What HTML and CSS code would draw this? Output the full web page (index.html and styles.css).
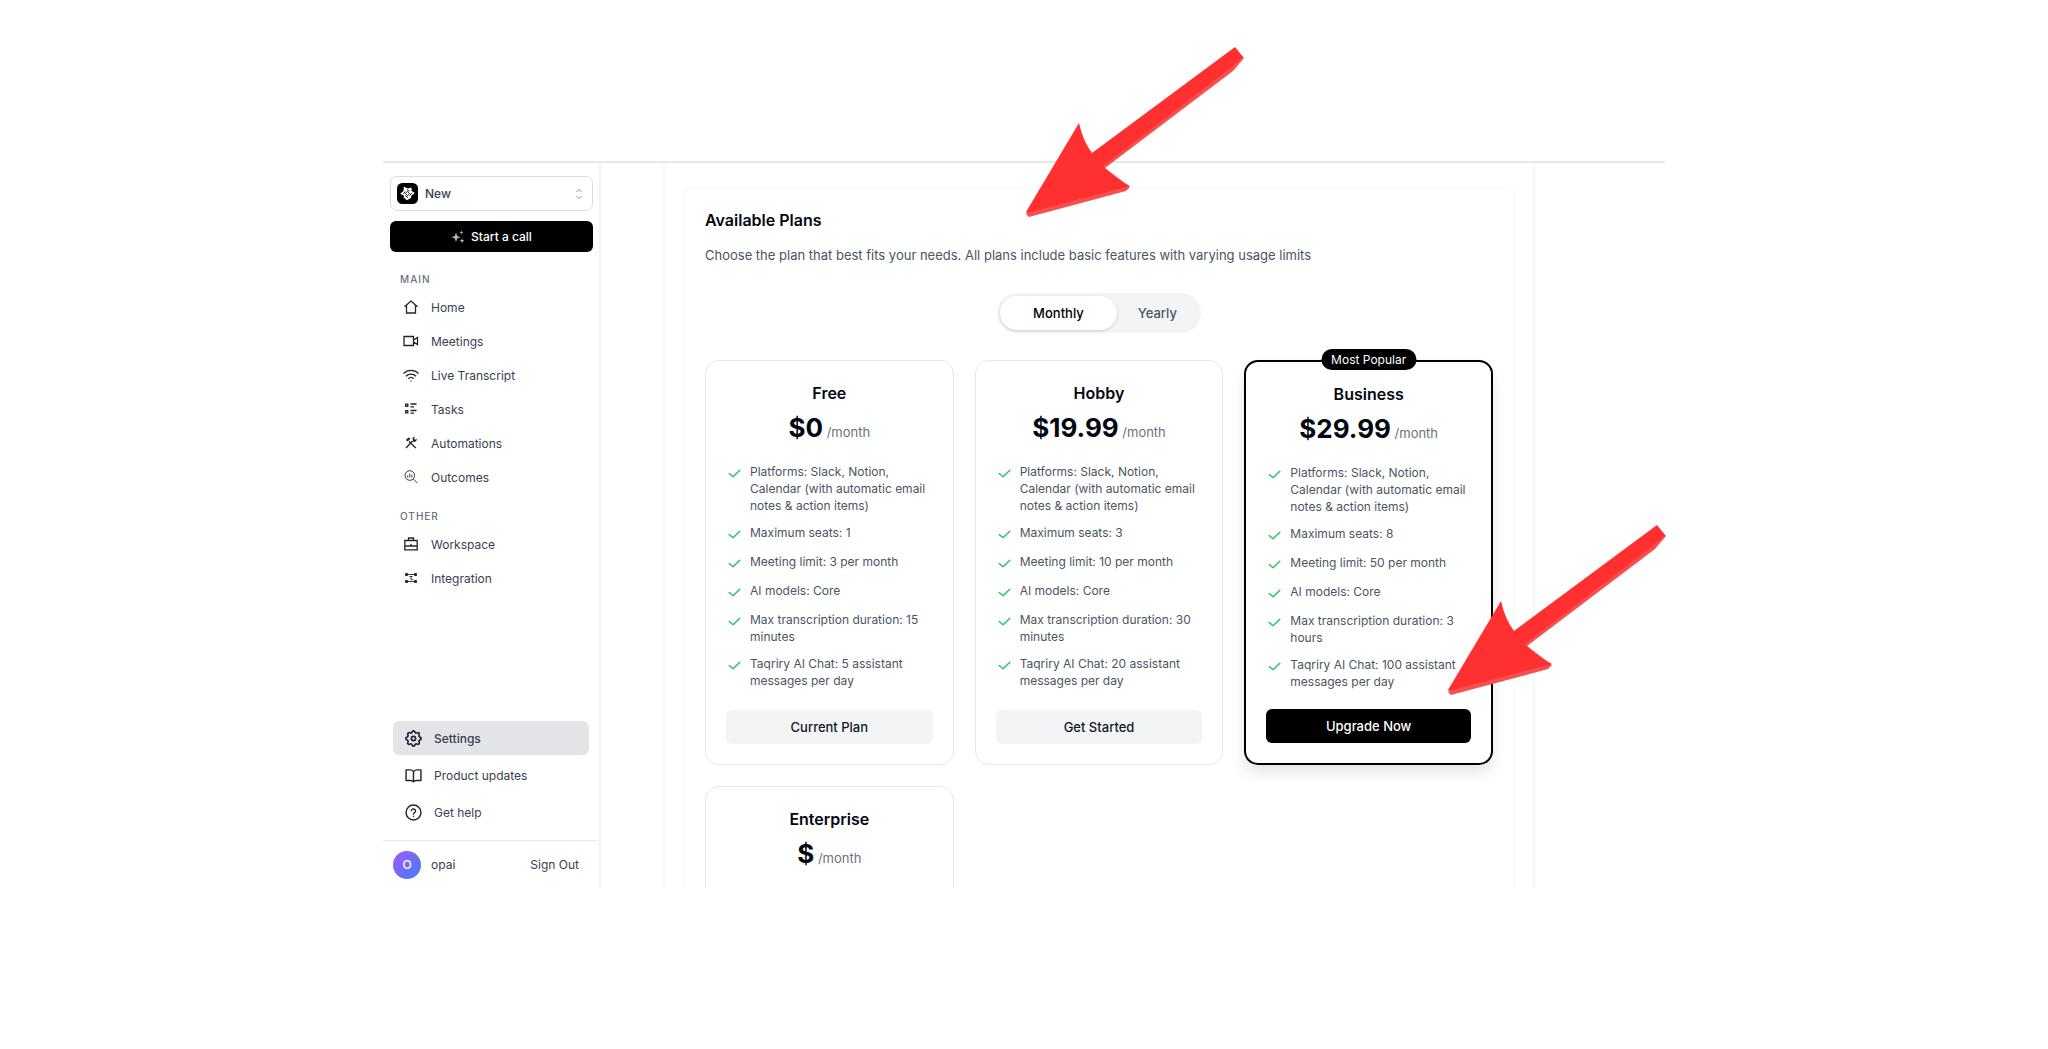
FILE: index.html
```html
<!DOCTYPE html>
<html lang="en">
<head>
  <meta charset="UTF-8">
  <meta name="viewport" content="width=device-width, initial-scale=1.0">
  <title>Available Plans</title>
  <link rel="stylesheet" href="styles.css">
</head>
<body>

<!-- Shared icons -->
<svg class="sprite" aria-hidden="true">
  <symbol id="check" viewBox="0 0 24 24"><path d="M19.500 7.500 10 16.500l-5.500-4.500"/></symbol>
  <symbol id="arrow" viewBox="0 0 218 171">
    <path fill="#f5504d" d="M209 1 L218 11 L207 24 L79 121 L104 140 L100 144 L3 170 L0 167 L70 110 Z"/>
    <path fill="#ff302f" d="M209 0 L217 10 L206 20 L77 119 Q88 131 104 139 L1 166 L0 165 L53 76 Q57 94 66 106 Z"/>
  </symbol>
</svg>

<div class="stage">
  <div class="app">

    <!-- Sidebar -->
    <aside class="sidebar">
      <div class="sidebar-top">
        <div class="workspace">
          <svg class="workspace-logo" viewBox="0 0 20 20" aria-hidden="true">
            <rect width="20" height="20" rx="5" fill="#000"/>
            <path fill="#fff" d="M6.500 3.500 10.500 5.200l3.200-.9.300 3.200L17 9.500l-3.200 2.300-.6 2.400L9.500 16.500 6.400 14l.1-2.200L3 10.200l3.200-2.700Z"/>
            <path fill="none" stroke="#000" stroke-width="0.800" d="m10 8 2 2-2 2-2-2ZM9.500 6l2.500 2M14 9.500l-2 2.500M10.500 14 8 12M6 10.500l2-2.500"/>
          </svg>
          <select class="workspace-select" aria-label="Workspace">
            <option>New</option>
          </select>
          <svg class="chevrons" viewBox="0 0 10 14" aria-hidden="true"><path d="m2.500 5 2.500-2.500L7.500 5M2.500 9 5 11.500 7.500 9"/></svg>
        </div>

        <button class="call-btn" type="button">
          <svg viewBox="0 0 14 14" aria-hidden="true"><path d="M5 2.500 6.200 6 9.500 7.200 6.200 8.500 5 12 3.800 8.500.5 7.200 3.800 6ZM10.500.500l.6 1.400 1.400.6-1.400.6-.6 1.400-.6-1.400-1.400-.6 1.400-.6ZM11 8.500l.7 1.600 1.600.7-1.600.7-.7 1.600-.7-1.600-1.600-.7 1.600-.7Z"/></svg>
          Start a call
        </button>
      </div>

      <nav class="nav">
        <h3 class="nav-title">MAIN</h3>
        <a class="nav-link" href="#">
          <svg class="icon" viewBox="0 0 16 16"><path d="M1.500 7.800 8 2l6.500 5.800M3.500 6.500v7.500h9V6.500"/></svg>
          Home
        </a>
        <a class="nav-link" href="#">
          <svg class="icon" viewBox="0 0 16 16"><path d="M1 3.500h9.500v9H1ZM10.500 7 14.500 4.500v7L10.500 9"/></svg>
          Meetings
        </a>
        <a class="nav-link" href="#">
          <svg class="icon" viewBox="0 0 16 16"><path d="M.5 6.500a10.500 10.500 0 0 1 15 0M2.900 9.200a7.200 7.200 0 0 1 10.200 0M5.300 11.700a3.900 3.900 0 0 1 5.400 0M7.500 13.800h1"/></svg>
          Live Transcript
        </a>
        <a class="nav-link" href="#">
          <svg class="icon" viewBox="0 0 16 16"><path d="M2.700 3.200h2.100v2.100H2.700ZM2.700 9.700h2.100v2.100H2.700ZM7.500 3h6M7.500 5.800h3.500M7.500 9.500h6M7.500 12.200h3.500"/></svg>
          Tasks
        </a>
        <a class="nav-link" href="#">
          <svg class="icon" viewBox="0 0 16 16"><path d="m3 13 6.500-7M6 6.500l6.800 6.500"/><path d="M2.800 5 5.500 2.500l2 1-2.700 3ZM9.500 3a2.500 2.500 0 0 1 2.500-.8l-1 1.500 1 1 1.700-1a2.500 2.500 0 0 1-3.700 2.800Z" fill="currentColor" stroke="none"/></svg>
          Automations
        </a>
        <a class="nav-link" href="#">
          <svg class="icon icon-thin" viewBox="0 0 16 16"><circle cx="6.800" cy="6.500" r="4.800"/><path d="m10.300 10 4 4M4.700 6.500v2M6.800 4.500v4M8.900 5.700v2.800"/></svg>
          Outcomes
        </a>

        <h3 class="nav-title">OTHER</h3>
        <a class="nav-link" href="#">
          <svg class="icon" viewBox="0 0 16 16"><path d="M1.800 4.500h12.400v9.300H1.800ZM5.500 4.500V2h5v2.500M1.800 10h12.400M8 8v1.200"/></svg>
          Workspace
        </a>
        <a class="nav-link" href="#">
          <svg class="icon icon-thin" viewBox="0 0 16 16"><path d="M4 4.500h8M4 11.500h8M6.500 6.500h3M8 6.500v3h2"/><path d="M2.500 3.500h2v2h-2ZM11.500 3.500h2v2h-2ZM2.500 10.500h2v2h-2ZM11.500 10.500h2v2h-2Z" fill="currentColor"/></svg>
          Integration
        </a>
      </nav>

      <nav class="nav-bottom">
        <a class="bottom-link active" href="#">
          <svg class="icon-lg" viewBox="2 2 20 20"><path d="M10.325 4.317c.426-1.756 2.924-1.756 3.350 0a1.724 1.724 0 0 0 2.573 1.066c1.543-.940 3.310.826 2.370 2.370a1.724 1.724 0 0 0 1.065 2.572c1.756.426 1.756 2.924 0 3.350a1.724 1.724 0 0 0-1.066 2.573c.940 1.543-.826 3.310-2.370 2.370a1.724 1.724 0 0 0-2.572 1.065c-.426 1.756-2.924 1.756-3.350 0a1.724 1.724 0 0 0-2.573-1.066c-1.543.940-3.310-.826-2.370-2.370a1.724 1.724 0 0 0-1.065-2.572c-1.756-.426-1.756-2.924 0-3.350a1.724 1.724 0 0 0 1.066-2.573c-.940-1.543.826-3.310 2.370-2.370.996.608 2.296.070 2.572-1.065Z"/><circle cx="12" cy="12" r="2.500"/></svg>
          Settings
        </a>
        <a class="bottom-link" href="#">
          <svg class="icon-lg" viewBox="0 0 24 24"><path d="M12 6.500C10.500 4.500 9 4 7 4H1.500v15H8c2 0 3.200.7 4 2 .8-1.300 2-2 4-2h6.500V4H17c-2 0-3.500.5-5 2.500ZM12 6.500V21"/></svg>
          Product updates
        </a>
        <a class="bottom-link" href="#">
          <svg class="icon-lg" viewBox="0 0 24 24"><circle cx="12" cy="12" r="10.500"/><path d="M9 9.200a3 3 0 0 1 5.900.9c0 2-2.900 2.500-2.900 4M12 17.300h.01"/></svg>
          Get help
        </a>
      </nav>

      <div class="account">
        <span class="avatar">O</span>
        <span class="account-name">opai</span>
        <button class="signout-btn" type="button">Sign Out</button>
      </div>
    </aside>

    <!-- Plans -->
    <main class="content">
      <section class="panel">
        <h1 class="panel-title">Available Plans</h1>
        <p class="panel-text">Choose the plan that best fits your needs. All plans include basic features with varying usage limits</p>

        <div class="toggle">
          <button class="toggle-btn selected" type="button">Monthly</button>
          <button class="toggle-btn" type="button">Yearly</button>
        </div>

        <div class="plans">
          <article class="plan">
            <h2 class="plan-name">Free</h2>
            <p class="plan-price"><strong>$0</strong> /month</p>
            <ul class="features">
              <li><svg class="check"><use href="#check"/></svg><span>Platforms: Slack, Notion, Calendar (with automatic email notes &amp; action items)</span></li>
              <li><svg class="check"><use href="#check"/></svg><span>Maximum seats: 1</span></li>
              <li><svg class="check"><use href="#check"/></svg><span>Meeting limit: 3 per month</span></li>
              <li><svg class="check"><use href="#check"/></svg><span>AI models: Core</span></li>
              <li><svg class="check"><use href="#check"/></svg><span>Max transcription duration: 15 minutes</span></li>
              <li><svg class="check"><use href="#check"/></svg><span>Taqriry AI Chat: 5 assistant messages per day</span></li>
            </ul>
            <button class="plan-btn" type="button">Current Plan</button>
          </article>

          <article class="plan">
            <h2 class="plan-name">Hobby</h2>
            <p class="plan-price"><strong>$19.99</strong> /month</p>
            <ul class="features">
              <li><svg class="check"><use href="#check"/></svg><span>Platforms: Slack, Notion, Calendar (with automatic email notes &amp; action items)</span></li>
              <li><svg class="check"><use href="#check"/></svg><span>Maximum seats: 3</span></li>
              <li><svg class="check"><use href="#check"/></svg><span>Meeting limit: 10 per month</span></li>
              <li><svg class="check"><use href="#check"/></svg><span>AI models: Core</span></li>
              <li><svg class="check"><use href="#check"/></svg><span>Max transcription duration: 30 minutes</span></li>
              <li><svg class="check"><use href="#check"/></svg><span>Taqriry AI Chat: 20 assistant messages per day</span></li>
            </ul>
            <button class="plan-btn" type="button">Get Started</button>
          </article>

          <article class="plan popular">
            <span class="badge">Most Popular</span>
            <h2 class="plan-name">Business</h2>
            <p class="plan-price"><strong>$29.99</strong> /month</p>
            <ul class="features">
              <li><svg class="check"><use href="#check"/></svg><span>Platforms: Slack, Notion, Calendar (with automatic email notes &amp; action items)</span></li>
              <li><svg class="check"><use href="#check"/></svg><span>Maximum seats: 8</span></li>
              <li><svg class="check"><use href="#check"/></svg><span>Meeting limit: 50 per month</span></li>
              <li><svg class="check"><use href="#check"/></svg><span>AI models: Core</span></li>
              <li><svg class="check"><use href="#check"/></svg><span>Max transcription duration: 3 hours</span></li>
              <li><svg class="check"><use href="#check"/></svg><span>Taqriry AI Chat: 100 assistant messages per day</span></li>
            </ul>
            <button class="plan-btn" type="button">Upgrade Now</button>
          </article>

          <article class="plan">
            <h2 class="plan-name">Enterprise</h2>
            <p class="plan-price"><strong>$</strong> /month</p>
          </article>
        </div>
      </section>
    </main>
  </div>

  <!-- Pointers over the page -->
  <svg class="arrow arrow-plans" aria-hidden="true"><use href="#arrow"/></svg>
  <svg class="arrow arrow-upgrade" aria-hidden="true"><use href="#arrow"/></svg>
</div>

</body>
</html>
```
FILE: styles.css
```css
/* Global Styles */
* {
  box-sizing: border-box;
}
body {
  margin: 0;
  min-height: 100vh;
  padding: 161px 24px;
  background-color: #fff;
  font-family: Inter, "Liberation Sans", sans-serif;
  font-size: 12px;
  color: #374151;
}
h1, h2, h3, p, ul {
  margin: 0;
  padding: 0;
}
button, select {
  font-family: inherit;
  cursor: pointer;
}
a {
  color: inherit;
  text-decoration: none;
}
svg {
  flex-shrink: 0;
}
.sprite {
  display: none;
}
.stage {
  position: relative;
  max-width: 1282px;
  margin: 0 auto;
}
.app {
  display: flex;
  height: calc(100vh - 322px);
  overflow: hidden;
  border-top: 2px solid #e5e7eb;
}

/* Sidebar */
.sidebar {
  display: flex;
  flex-direction: column;
  width: 218px;
  flex-shrink: 0;
  border-right: 2px solid #f3f4f6;
}
.sidebar-top {
  display: flex;
  flex-direction: column;
  gap: 10px;
  padding: 13px 6px 0 7px;
}
.workspace {
  display: flex;
  align-items: center;
  height: 35px;
  padding: 0 8px 0 6px;
  border: 1px solid #d9dce3;
  border-radius: 7px;
}
.workspace-logo {
  width: 21px;
  height: 21px;
}
.workspace-select {
  flex: 1;
  appearance: none;
  border: none;
  background: none;
  padding: 0 7px;
  font-size: 12px;
  font-weight: 500;
  color: #374151;
}
.chevrons {
  width: 10px;
  height: 14px;
  fill: none;
  stroke: #8b919c;
}
.call-btn {
  display: flex;
  align-items: center;
  justify-content: center;
  gap: 6px;
  height: 31px;
  border: none;
  border-radius: 6px;
  background-color: #000;
  color: #fff;
  font-size: 12px;
  font-weight: 500;
}
.call-btn svg {
  width: 14px;
  height: 14px;
  fill: #b5b5b5;
}
.nav {
  padding: 18px 10px 0;
}
.nav-title {
  padding-left: 7px;
  line-height: 18px;
  font-size: 10px;
  font-weight: 500;
  letter-spacing: 1px;
  color: #6b7280;
}
.nav-link + .nav-title {
  margin-top: 13px;
}
.nav-link {
  display: flex;
  align-items: center;
  gap: 12px;
  height: 34px;
  padding-left: 10px;
}
.nav-title + .nav-link {
  margin-top: 2px;
}
.icon, .icon-lg {
  width: 16px;
  height: 16px;
  fill: none;
  stroke: currentColor;
  stroke-width: 1.3;
  color: #1f2430;
}
.icon-thin {
  stroke-width: 0.9;
}
.icon-lg {
  width: 17px;
  height: 17px;
  stroke-width: 2;
  stroke-linecap: round;
  stroke-linejoin: round;
}
.nav-bottom {
  display: flex;
  flex-direction: column;
  gap: 3px;
  margin-top: auto;
  padding: 0 10px 11px;
}
.bottom-link {
  display: flex;
  align-items: center;
  gap: 12px;
  height: 34px;
  padding-left: 12px;
  border-radius: 6px;
}
.bottom-link.active {
  background-color: #e3e4e8;
  font-weight: 500;
}
.account {
  display: flex;
  align-items: center;
  gap: 10px;
  height: 48px;
  padding: 0 20px 0 10px;
  border-top: 1px solid #e9eaed;
}
.avatar {
  display: flex;
  align-items: center;
  justify-content: center;
  width: 28px;
  height: 28px;
  border-radius: 50%;
  background: linear-gradient(135deg, #a855f7, #3b82f6);
  color: #fff;
  font-size: 12px;
  font-weight: 500;
}
.signout-btn {
  margin-left: auto;
  padding: 0;
  border: none;
  background: none;
  font-size: 12px;
  color: #374151;
}

/* Plans */
.content {
  flex: 1;
  margin: 0 130px 0 62px;
  padding: 24px 19px 0;
  border-left: 2px solid #f6f7f8;
  border-right: 2px solid #f6f7f8;
}
.panel {
  height: 100%;
  padding: 20px 20px 0;
  border: 1px solid #f8f8f9;
  border-bottom: none;
  border-radius: 8px 8px 0 0;
  box-shadow: 0 1px 3px rgba(0, 0, 0, 0.04);
}
.panel-title {
  line-height: 24px;
  font-size: 16px;
  font-weight: 600;
  color: #030712;
}
.panel-text {
  margin-top: 13px;
  line-height: 20px;
  font-size: 13px;
  color: #4b5563;
}
.toggle {
  display: flex;
  width: fit-content;
  margin: 28px auto 0;
  padding: 3px;
  border-radius: 21px;
  background-color: #f3f4f6;
}
.toggle-btn {
  height: 34px;
  padding: 0 21px;
  border: none;
  border-radius: 17px;
  background: none;
  font-size: 13px;
  font-weight: 500;
  color: #4b5563;
}
.toggle-btn.selected {
  padding: 0 33px;
  background-color: #fff;
  color: #000;
  box-shadow: 0 1px 3px rgba(0, 0, 0, 0.16);
}
.plans {
  display: grid;
  grid-template-columns: repeat(3, 1fr);
  gap: 21px;
  margin-top: 27px;
}
.plan {
  display: flex;
  flex-direction: column;
  position: relative;
  min-height: 400px;
  padding: 20px;
  border: 1px solid #e5e7eb;
  border-radius: 14px;
}
.plan.popular {
  border: 2px solid #000;
  box-shadow: 0 8px 14px rgba(0, 0, 0, 0.1);
}
.badge {
  position: absolute;
  top: -13px;
  left: 50%;
  transform: translateX(-50%);
  padding: 0 10px;
  border-radius: 11px;
  background-color: #000;
  color: #fff;
  line-height: 21px;
  font-size: 12px;
  font-weight: 400;
  white-space: nowrap;
}
.plan-name {
  text-align: center;
  line-height: 24px;
  font-size: 16px;
  font-weight: 600;
  color: #030712;
}
.plan-price {
  margin-top: 7px;
  text-align: center;
  line-height: 31px;
  font-size: 13px;
  color: #6b7280;
}
.plan-price strong {
  font-size: 26px;
  font-weight: 700;
  color: #030712;
}
.features {
  display: flex;
  flex-direction: column;
  gap: 10px;
  margin: 15px 0 19px;
  list-style: none;
  line-height: 17px;
  color: #4b5563;
}
.features li {
  display: flex;
  gap: 7px;
}
.check {
  width: 17px;
  height: 17px;
  margin-top: 2px;
  fill: none;
  stroke: #22c55e;
  stroke-width: 2;
  stroke-linecap: round;
  stroke-linejoin: round;
}
.plan-btn {
  height: 34px;
  margin-top: auto;
  border: none;
  border-radius: 6px;
  background-color: #f3f4f6;
  font-size: 13px;
  font-weight: 500;
  color: #111827;
}
.popular .plan-btn {
  background-color: #000;
  color: #fff;
}

/* Pointers */
.arrow {
  position: absolute;
  width: 218px;
  height: 171px;
}
.arrow-plans {
  top: -114px;
  right: 421px;
}
.arrow-upgrade {
  top: 364px;
  right: -1px;
}
```
